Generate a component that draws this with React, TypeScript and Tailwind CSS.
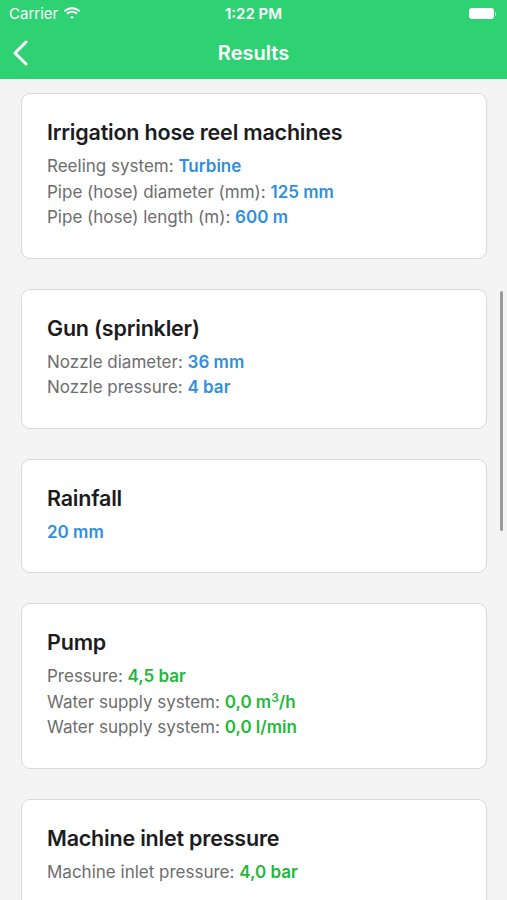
import React from "react";

type Row = { label?: string; value: React.ReactNode };
type Card = { title: string; color: "blue" | "green"; rows: Row[] };

const cards: Card[] = [
  {
    title: "Irrigation hose reel machines",
    color: "blue",
    rows: [
      { label: "Reeling system:", value: "Turbine" },
      { label: "Pipe (hose) diameter (mm):", value: "125 mm" },
      { label: "Pipe (hose) length (m):", value: "600 m" },
    ],
  },
  {
    title: "Gun (sprinkler)",
    color: "blue",
    rows: [
      { label: "Nozzle diameter:", value: "36 mm" },
      { label: "Nozzle pressure:", value: "4 bar" },
    ],
  },
  { title: "Rainfall", color: "blue", rows: [{ value: "20 mm" }] },
  {
    title: "Pump",
    color: "green",
    rows: [
      { label: "Pressure:", value: "4,5 bar" },
      {
        label: "Water supply system:",
        value: (
          <>
            0,0 m<sup className="text-[12px]">3</sup>/h
          </>
        ),
      },
      { label: "Water supply system:", value: "0,0 l/min" },
    ],
  },
  {
    title: "Machine inlet pressure",
    color: "green",
    rows: [{ label: "Machine inlet pressure:", value: "4,0 bar" }],
  },
];

const App: React.FC = () => {
  return (
    <div
      className="w-[507px] h-[900px] overflow-hidden bg-[#f4f4f4] relative"
      style={{ fontFamily: "Inter, 'Liberation Sans', sans-serif" }}
    >
      {/* status bar + nav */}
      <div className="bg-[#2fd273] text-white">
        <div className="h-[27px] flex items-center justify-between px-[9px] relative">
          <div className="flex items-center gap-[5px] text-[15px] leading-none">
            <span>Carrier</span>
            <svg width="18" height="13" viewBox="0 0 18 13" fill="white">
              <path d="M9 2.2c2.6 0 5 1 6.8 2.7l1.3-1.4C14.9 1.4 12 .2 9 .2S3.1 1.4.9 3.5l1.3 1.4C4 3.2 6.4 2.2 9 2.2z" />
              <path d="M9 5.8c1.6 0 3.1.6 4.2 1.7l1.3-1.4C13.1 4.7 11.1 3.8 9 3.8s-4.1.9-5.5 2.3l1.3 1.4C5.9 6.4 7.4 5.8 9 5.8z" />
              <path d="M9 9.2c.7 0 1.3.3 1.8.7L9 12 7.2 9.9c.5-.4 1.1-.7 1.8-.7z" />
            </svg>
          </div>
          <span className="absolute left-1/2 -translate-x-1/2 text-[15px] font-semibold leading-none">
            1:22 PM
          </span>
          <div className="flex items-center gap-[1px] mr-[2px]">
            <div className="w-[25px] h-[11px] rounded-[3px] bg-white" />
            <div className="w-[1.5px] h-[4px] bg-white/60 rounded-r-sm" />
          </div>
        </div>
        <div className="h-[52px] flex items-center justify-center relative">
          <svg
            className="absolute left-[12px] top-[13px]"
            width="18"
            height="26"
            viewBox="0 0 18 26"
            fill="none"
            stroke="white"
            strokeWidth="3"
            strokeLinecap="round"
            strokeLinejoin="round"
          >
            <path d="M14 2 L3 13 L14 24" />
          </svg>
          <span className="text-[20px] font-semibold">Results</span>
        </div>
      </div>

      {/* list */}
      <div className="flex flex-col gap-[30px] pt-[14px] px-[21px] pr-[20px]">
        {cards.map((card) => (
          <div
            key={card.title}
            className="bg-white border border-[#d9d9d9] rounded-[9px] px-[25px] pt-[26px] pb-[27px]"
          >
            <div className="text-[21.5px] leading-[24px] font-semibold text-[#1c1c1e] tracking-[-0.2px]">
              {card.title}
            </div>
            <div className="mt-[10px]">
              {card.rows.map((row, i) => (
                <div key={i} className="text-[17px] leading-[25.5px] text-[#6d6d6d]">
                  {row.label && <span>{row.label} </span>}
                  <span
                    className={
                      card.color === "blue"
                        ? "font-semibold text-[#2f8fdc]"
                        : "font-semibold text-[#1fb83a]"
                    }
                  >
                    {row.value}
                  </span>
                </div>
              ))}
            </div>
          </div>
        ))}
      </div>

      {/* scroll indicator */}
      <div className="absolute left-[500px] top-[291px] w-[3px] h-[240px] rounded-full bg-[#9a9a9a]" />
    </div>
  );
};

export default App;
